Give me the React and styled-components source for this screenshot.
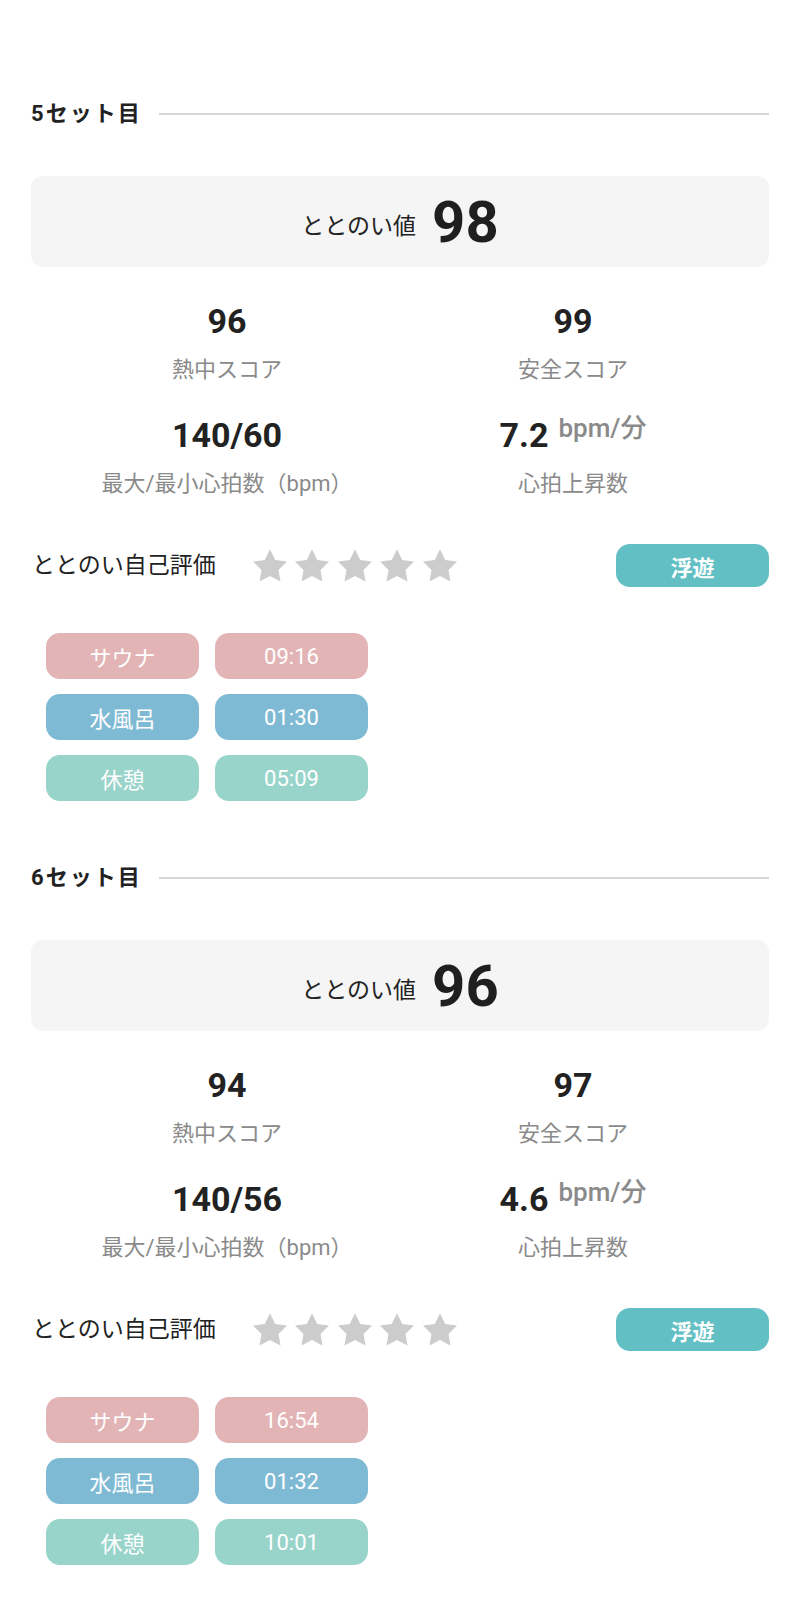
import React from "react";
import styled, { createGlobalStyle } from "styled-components";

const GlobalStyle = createGlobalStyle`
  html, body {
    margin: 0;
    padding: 0;
    background: #ffffff;
  }
  body {
    font-family: Roboto, "Noto Sans CJK JP", sans-serif;
    color: #222222;
  }
`;

const Page = styled.div`
  width: 800px;
  box-sizing: border-box;
  padding: 99px 31px 40px;
  display: flex;
  flex-direction: column;
  gap: 62px;
`;

const Section = styled.section`
  display: flex;
  flex-direction: column;
`;

const SectionHeader = styled.div`
  display: flex;
  align-items: center;
  gap: 17px;
  height: 30px;
`;

const SectionTitle = styled.h2`
  margin: 0;
  font-size: 22px;
  font-weight: 700;
  letter-spacing: 2px;
  line-height: 30px;
  color: #222222;
`;

const SectionLine = styled.div`
  flex: 1;
  height: 2px;
  background: #d6d6d6;
`;

const ScoreCard = styled.div`
  margin-top: 47px;
  height: 91px;
  border-radius: 12px;
  background: #f5f5f5;
  display: flex;
  align-items: center;
  justify-content: center;
  gap: 16px;
`;

const ScoreLabel = styled.span`
  font-size: 23px;
  line-height: 30px;
  margin-top: 10px;
  color: #222222;
`;

const ScoreValue = styled.span`
  font-size: 58px;
  line-height: 64px;
  font-weight: 700;
  color: #1f1f1f;
`;

const StatsGrid = styled.div`
  margin-top: 34px;
  padding: 0 23px;
  display: grid;
  grid-template-columns: 1fr 1fr;
  row-gap: 30px;
`;

const Stat = styled.div`
  display: flex;
  flex-direction: column;
  align-items: center;
  gap: 14px;
`;

const StatValue = styled.div`
  display: flex;
  align-items: flex-start;
  font-size: 34px;
  line-height: 40px;
  height: 40px;
  font-weight: 700;
  color: #222222;
  white-space: nowrap;
`;

const StatUnit = styled.span`
  font-size: 26px;
  line-height: 30px;
  font-weight: 500;
  color: #8a8a8a;
  margin-left: 10px;
  margin-top: -2px;
`;

const StatLabel = styled.div`
  font-size: 22px;
  line-height: 30px;
  color: #8a8a8a;
  white-space: nowrap;
`;

const RatingRow = styled.div`
  margin-top: 45px;
  height: 43px;
  display: flex;
  align-items: center;
`;

const RatingLabel = styled.span`
  font-size: 23px;
  line-height: 30px;
  color: #222222;
  margin-left: 1px;
  margin-right: 37px;
`;

const Stars = styled.div`
  display: flex;
  gap: 8.5px;
`;

const Star = styled.svg`
  width: 34px;
  height: 33px;
  display: block;
  fill: ${(p) => (p.$on ? "#f5c242" : "#cccccc")};
`;

const MoodBadge = styled.div`
  margin-left: auto;
  width: 153px;
  height: 43px;
  border-radius: 14px;
  background: #62bfc4;
  color: #ffffff;
  font-size: 22px;
  font-weight: 700;
  display: flex;
  align-items: center;
  justify-content: center;
`;

const Phases = styled.div`
  margin-top: 46px;
  padding-left: 15px;
  display: flex;
  flex-direction: column;
  gap: 15px;
`;

const PhaseRow = styled.div`
  display: flex;
  gap: 16px;
`;

const Chip = styled.div`
  width: 153px;
  height: 46px;
  border-radius: 14px;
  background: ${(p) => p.$color};
  color: #ffffff;
  font-size: 22px;
  display: flex;
  align-items: center;
  justify-content: center;
`;

const phaseColors = {
  サウナ: "#e3b4b5",
  水風呂: "#7fbad5",
  休憩: "#99d4cb",
};

const sets = [
  {
    no: 5,
    total: 98,
    heat: 96,
    safety: 99,
    bpm: "140/60",
    rise: "7.2",
    mood: "浮遊",
    phases: [
      ["サウナ", "09:16"],
      ["水風呂", "01:30"],
      ["休憩", "05:09"],
    ],
  },
  {
    no: 6,
    total: 96,
    heat: 94,
    safety: 97,
    bpm: "140/56",
    rise: "4.6",
    mood: "浮遊",
    phases: [
      ["サウナ", "16:54"],
      ["水風呂", "01:32"],
      ["休憩", "10:01"],
    ],
  },
];

const StarIcon = ({ on }) => (
  <Star viewBox="2 2 20 19.1" $on={on}>
    <path d="M12 2l3.09 6.26L22 9.27l-5 4.87 1.18 6.88L12 17.77l-6.18 3.25L7 14.14 2 9.27l6.91-1.01L12 2z" />
  </Star>
);

const SetBlock = ({ set }) => (
  <Section>
    <SectionHeader>
      <SectionTitle>{set.no}セット目</SectionTitle>
      <SectionLine />
    </SectionHeader>

    <ScoreCard>
      <ScoreLabel>ととのい値</ScoreLabel>
      <ScoreValue>{set.total}</ScoreValue>
    </ScoreCard>

    <StatsGrid>
      <Stat>
        <StatValue>{set.heat}</StatValue>
        <StatLabel>熱中スコア</StatLabel>
      </Stat>
      <Stat>
        <StatValue>{set.safety}</StatValue>
        <StatLabel>安全スコア</StatLabel>
      </Stat>
      <Stat>
        <StatValue>{set.bpm}</StatValue>
        <StatLabel>最大/最小心拍数（bpm）</StatLabel>
      </Stat>
      <Stat>
        <StatValue>
          {set.rise}
          <StatUnit>bpm/分</StatUnit>
        </StatValue>
        <StatLabel>心拍上昇数</StatLabel>
      </Stat>
    </StatsGrid>

    <RatingRow>
      <RatingLabel>ととのい自己評価</RatingLabel>
      <Stars>
        {[0, 1, 2, 3, 4].map((i) => (
          <StarIcon key={i} on={false} />
        ))}
      </Stars>
      <MoodBadge>{set.mood}</MoodBadge>
    </RatingRow>

    <Phases>
      {set.phases.map(([name, time]) => (
        <PhaseRow key={name}>
          <Chip $color={phaseColors[name]}>{name}</Chip>
          <Chip $color={phaseColors[name]}>{time}</Chip>
        </PhaseRow>
      ))}
    </Phases>
  </Section>
);

export default function App() {
  return (
    <>
      <GlobalStyle />
      <Page>
        {sets.map((s) => (
          <SetBlock key={s.no} set={s} />
        ))}
      </Page>
    </>
  );
}
